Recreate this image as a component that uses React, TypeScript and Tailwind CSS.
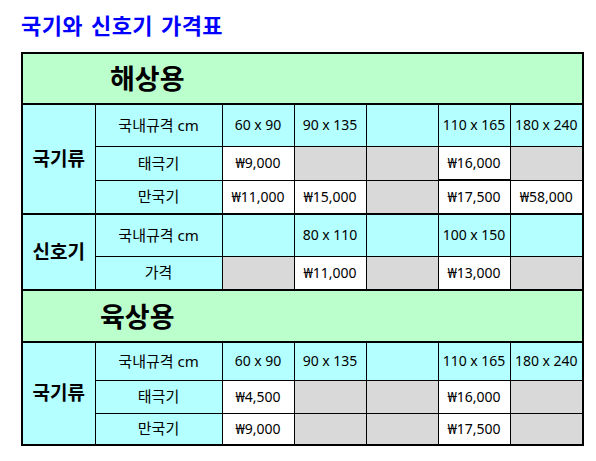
const cell = "border border-black text-center align-middle p-0 text-[14px] leading-none";
const label = "border border-black text-center align-middle p-0 text-[15px] leading-none bg-[#b4ffff]";
const cyan = "bg-[#b4ffff]";
const white = "bg-white";
const gray = "bg-[#d9d9d9]";
const green = "bg-[#bbffcc]";

type Kind = "c" | "w" | "g";
type Cell = { kind: Kind; text?: string; thickBottom?: boolean };

function DataCells({ cells }: { cells: Cell[] }) {
  return (
    <>
      {cells.map((c, i) => (
        <td
          key={i}
          className={`${cell} ${c.kind === "c" ? cyan : c.kind === "w" ? white : gray} ${c.thickBottom ? "border-b-2" : ""}`}
        >
          {c.text ?? ""}
        </td>
      ))}
    </>
  );
}

export default function App() {
  return (
    <div className="w-[596px] h-[461px] bg-white text-black font-['Noto_Sans','Noto_Sans_CJK_KR',sans-serif]">
      <h1 className="pl-[21px] pt-[11px] h-[52px] text-[22px] font-bold leading-[28px] tracking-[0.4px] [word-spacing:2px] text-[#0000ff]">
        국기와 신호기 가격표
      </h1>
      <table className="ml-[21px] table-fixed border-collapse border-2 border-black w-[561px]">
        <colgroup>
          <col className="w-[73px]" />
          <col className="w-[127px]" />
          <col className="w-[72px]" />
          <col className="w-[72px]" />
          <col className="w-[72px]" />
          <col className="w-[72px]" />
          <col className="w-[73px]" />
        </colgroup>
        <tbody>
          <tr className="h-[51px]">
            <td colSpan={7} className={`border-2 border-black p-0 pl-[87px] text-left align-middle text-[27px] font-bold leading-none ${green}`}>
              해상용
            </td>
          </tr>
          <tr className="h-[42px]">
            <td rowSpan={3} className={`${cell} ${cyan} border-t-2 border-b-2 text-[19px] font-bold`}>국기류</td>
            <td className={label}>국내규격 cm</td>
            <DataCells
              cells={[
                { kind: "c", text: "60 x 90" },
                { kind: "c", text: "90 x 135" },
                { kind: "c" },
                { kind: "c", text: "110 x 165" },
                { kind: "c", text: "180 x 240" },
              ]}
            />
          </tr>
          <tr className="h-[34px]">
            <td className={label}>태극기</td>
            <DataCells
              cells={[
                { kind: "w", text: "₩9,000" },
                { kind: "g" },
                { kind: "g" },
                { kind: "w", text: "₩16,000", thickBottom: true },
                { kind: "g" },
              ]}
            />
          </tr>
          <tr className="h-[34px] border-b-2 border-black">
            <td className={`${label} border-b-2`}>만국기</td>
            <DataCells
              cells={[
                { kind: "w", text: "₩11,000", thickBottom: true },
                { kind: "w", text: "₩15,000", thickBottom: true },
                { kind: "g", thickBottom: true },
                { kind: "w", text: "₩17,500", thickBottom: true },
                { kind: "w", text: "₩58,000", thickBottom: true },
              ]}
            />
          </tr>
          <tr className="h-[42px]">
            <td rowSpan={2} className={`${cell} ${cyan} border-b-2 text-[19px] font-bold`}>신호기</td>
            <td className={label}>국내규격 cm</td>
            <DataCells
              cells={[
                { kind: "c" },
                { kind: "c", text: "80 x 110" },
                { kind: "c" },
                { kind: "c", text: "100 x 150" },
                { kind: "c" },
              ]}
            />
          </tr>
          <tr className="h-[34px]">
            <td className={`${label} border-b-2`}>가격</td>
            <DataCells
              cells={[
                { kind: "g", thickBottom: true },
                { kind: "w", text: "₩11,000", thickBottom: true },
                { kind: "g", thickBottom: true },
                { kind: "w", text: "₩13,000", thickBottom: true },
                { kind: "g", thickBottom: true },
              ]}
            />
          </tr>
          <tr className="h-[52px]">
            <td colSpan={7} className={`border-2 border-black p-0 pl-[77px] text-left align-middle text-[27px] font-bold leading-none ${green}`}>
              육상용
            </td>
          </tr>
          <tr className="h-[38px]">
            <td rowSpan={3} className={`${cell} ${cyan} border-t-2 text-[19px] font-bold`}>국기류</td>
            <td className={label}>국내규격 cm</td>
            <DataCells
              cells={[
                { kind: "c", text: "60 x 90" },
                { kind: "c", text: "90 x 135" },
                { kind: "c" },
                { kind: "c", text: "110 x 165" },
                { kind: "c", text: "180 x 240" },
              ]}
            />
          </tr>
          <tr className="h-[33px]">
            <td className={label}>태극기</td>
            <DataCells
              cells={[
                { kind: "w", text: "₩4,500" },
                { kind: "g" },
                { kind: "g" },
                { kind: "w", text: "₩16,000" },
                { kind: "g" },
              ]}
            />
          </tr>
          <tr className="h-[32px]">
            <td className={label}>만국기</td>
            <DataCells
              cells={[
                { kind: "w", text: "₩9,000" },
                { kind: "g" },
                { kind: "g" },
                { kind: "w", text: "₩17,500" },
                { kind: "g" },
              ]}
            />
          </tr>
        </tbody>
      </table>
    </div>
  );
}
